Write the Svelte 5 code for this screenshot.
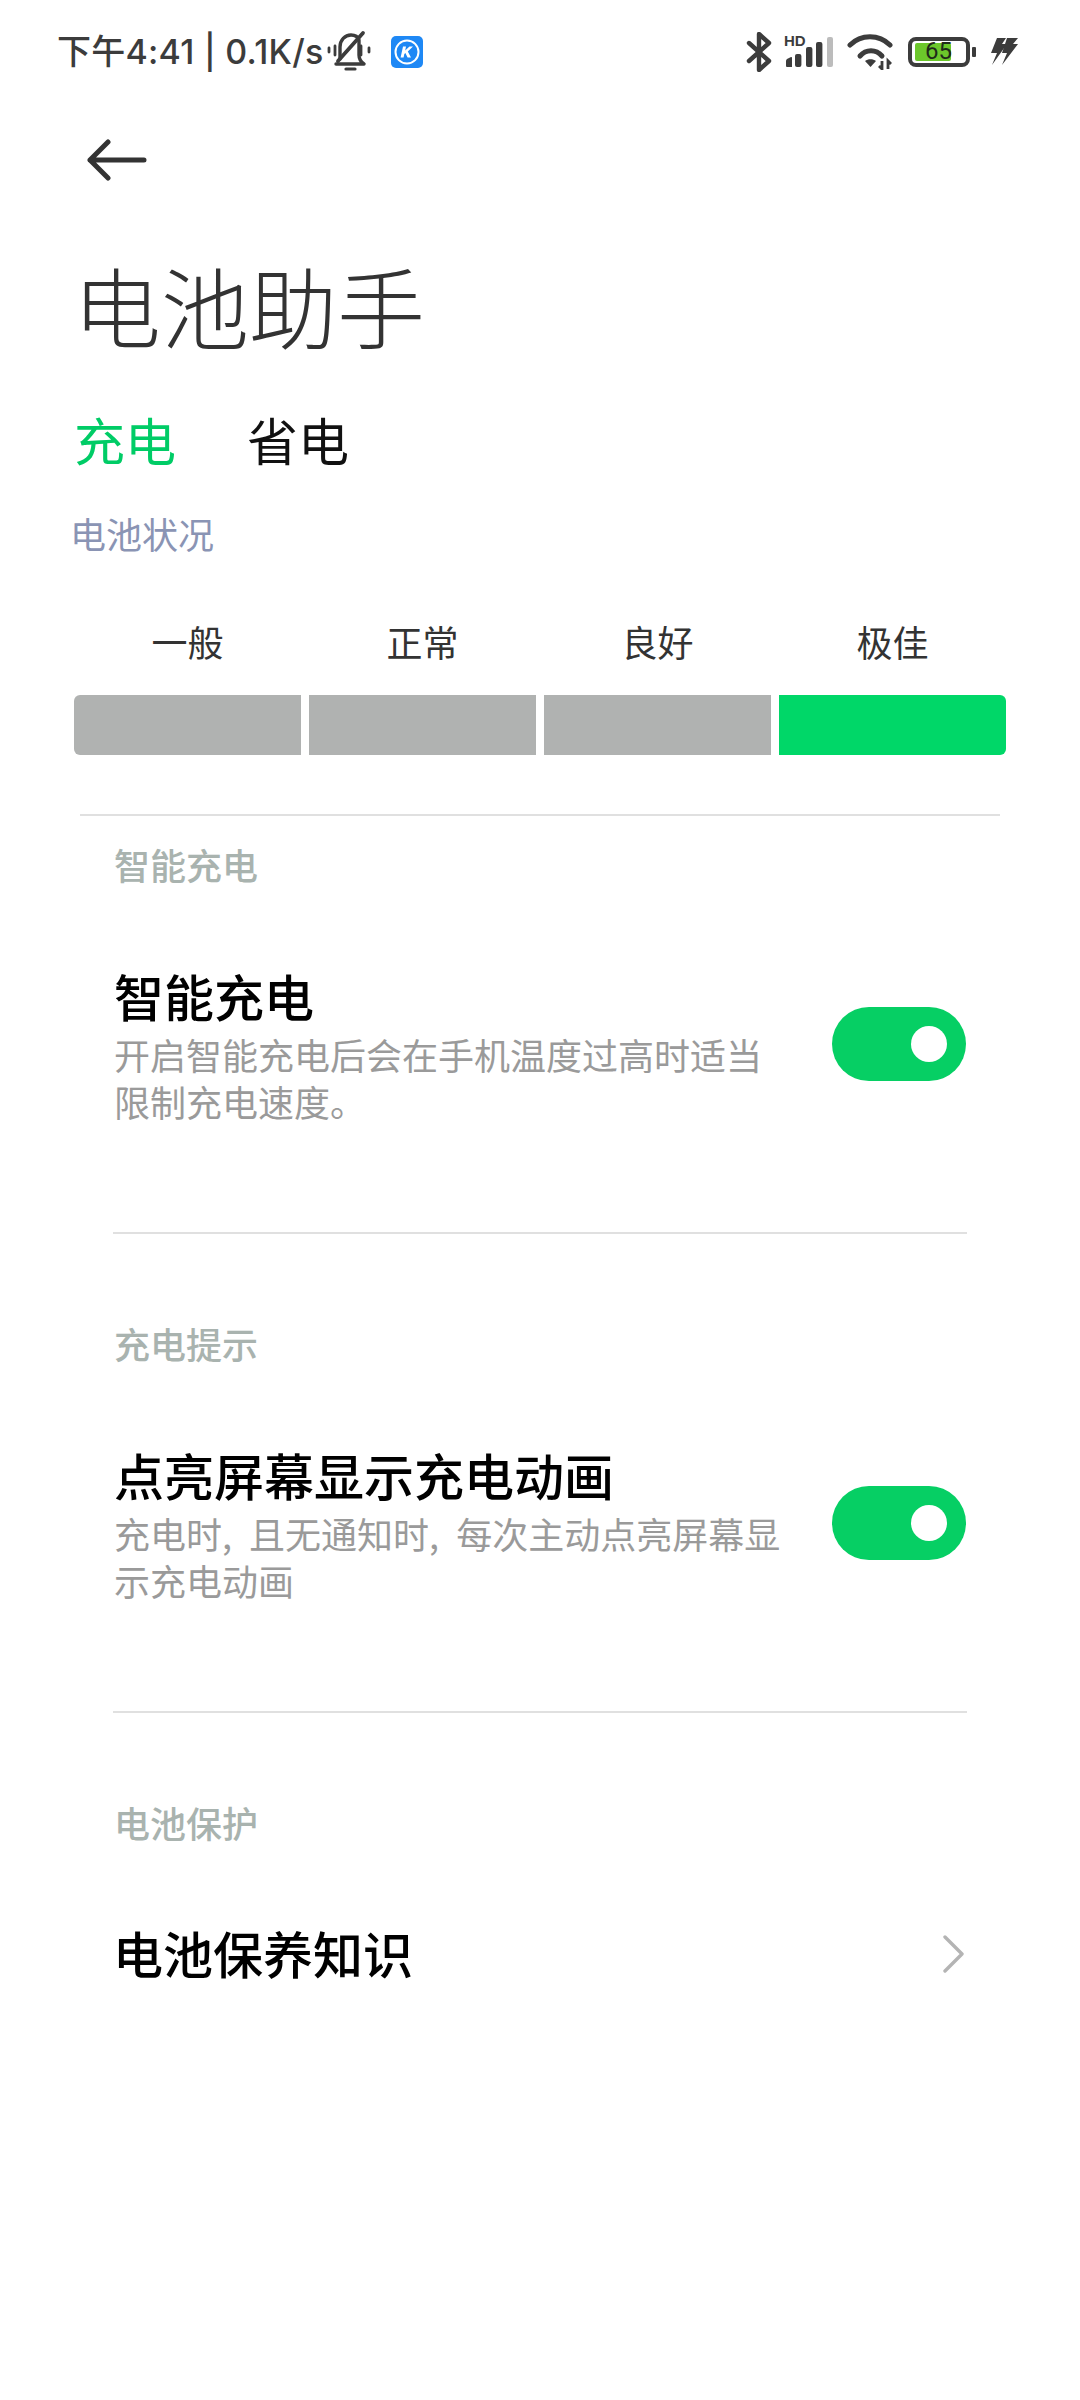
<script>
  const levels = [
    { name: '一般', on: false },
    { name: '正常', on: false },
    { name: '良好', on: false },
    { name: '极佳', on: true }
  ];
  const sections = [
    { head: '智能充电', title: '智能充电', lines: ['开启智能充电后会在手机温度过高时适当', '限制充电速度。'] },
    { head: '充电提示', title: '点亮屏幕显示充电动画', lines: ['充电时, 且无通知时, 每次主动点亮屏幕显', '示充电动画'] }
  ];
</script>

<div class="page">
  <div class="status">
    <div class="status-left">
      <span class="clock">下午4:41 | 0.1K/s</span>
      <svg class="bell" width="50" height="48" viewBox="3 0 50 48" fill="none" stroke="#3c3c3c" stroke-linecap="round" stroke-linejoin="round">
        <path d="M19 31V19c0-7 5-12 11-12 4 0 7 2 8 5v15c0 4 2 7 5 9H15" stroke-width="3.4" />
        <path d="M17 33L42 5" stroke-width="3.8" />
        <path d="M25 41h9" stroke-width="3.2" />
        <path d="M8 20v4M14 18v9M40 18v9M48 20v4" stroke-width="2.8" />
      </svg>
      <svg class="kapp" width="32" height="32" viewBox="0 0 32 32">
        <rect width="32" height="32" rx="5" fill="#1e88f5" />
        <circle cx="16" cy="16" r="11.5" fill="none" stroke="#fff" stroke-width="2" />
        <path d="M12 10.5h3l-.8 4 4.3-4h3.5l-5.2 4.9 3.2 6.1h-3.4l-2.2-4.5-1.1 1-.7 3.5h-3z" fill="#fff" />
      </svg>
    </div>
    <div class="status-right">
      <svg width="26" height="40" viewBox="0 0 26 40" fill="none" stroke="#3c3c3c" stroke-width="4.4" stroke-linejoin="round" stroke-linecap="round">
        <path d="M3 11l20 18-10 9V2l10 9L3 29" />
      </svg>
      <div class="signal">
        <span class="hd">HD</span>
        <svg width="50" height="30" viewBox="0 0 50 30" fill="#3c3c3c">
          <path d="M2 24q0-1 1-2l4-2q1-.5 1 1v9H3q-1 0-1-1z" />
          <rect x="11" y="17" width="6.4" height="13" rx="2" />
          <rect x="22" y="10" width="6.4" height="20" rx="2" />
          <rect x="32" y="5" width="6.4" height="25" rx="2" />
          <rect x="43" y="0" width="6" height="30" rx="2" fill="#bcbcbc" />
        </svg>
      </div>
      <svg class="wifi" width="48" height="36" viewBox="0 0 48 36" fill="none" stroke="#3c3c3c" stroke-width="5" stroke-linecap="round">
        <path d="M3 11C14 0 32 0 43 11" />
        <path d="M13 22c6-7 16-7 22 0" />
        <path d="M18 27l5.5 6 5.5-6c-3-2.5-8-2.5-11 0z" fill="#3c3c3c" stroke="none" />
        <path d="M35 27v8l-3-3M41 35v-8l3 3" stroke-width="2.8" stroke-linecap="butt" />
      </svg>
      <div class="battery">
        <div class="batt-body">
          <div class="batt-fill"></div>
          <span class="batt-num">65</span>
        </div>
        <div class="batt-nub"></div>
      </div>
      <svg class="bolt" width="28" height="30" viewBox="0 0 28 30" fill="#3c3c3c">
        <path d="M6 1h9l-4 6h5L1 28l5-12H0z" />
        <path d="M16 1h11l-5 6h5L11 28l5-12h-5z" />
      </svg>
    </div>
  </div>

  <div class="nav">
    <svg width="60" height="42" viewBox="0 0 60 42" fill="none" stroke="#333" stroke-width="5" stroke-linecap="round" stroke-linejoin="round">
      <path d="M21 3L3 21l18 18M3 21h54" />
    </svg>
  </div>

  <h1>电池助手</h1>

  <div class="tabs">
    <span class="tab active">充电</span>
    <span class="tab">省电</span>
  </div>

  <div class="state">电池状况</div>

  <div class="levels">
    {#each levels as l}
      <div class="level-name">{l.name}</div>
    {/each}
    {#each levels as l}
      <div class="bar" class:on={l.on}></div>
    {/each}
  </div>

  <div class="rule top"></div>

  {#each sections as s}
    <section class="sec">
      <div class="sec-head">{s.head}</div>
      <div class="item">
        <div class="item-text">
          <div class="item-title">{s.title}</div>
          {#each s.lines as line}
            <div class="item-sub">{line}</div>
          {/each}
        </div>
        <div class="toggle"><div class="knob"></div></div>
      </div>
      <div class="rule inner"></div>
    </section>
  {/each}

  <section class="sec">
    <div class="sec-head">电池保护</div>
    <div class="link">
      <span class="item-title">电池保养知识</span>
      <svg width="22" height="38" viewBox="0 0 22 38" fill="none" stroke="#b4b4b4" stroke-width="3.4" stroke-linecap="round" stroke-linejoin="round">
        <path d="M3 2l17 17L3 36" />
      </svg>
    </div>
  </section>
</div>

<style>
  :global(body) {
    margin: 0;
    background: #fff;
  }
  .page {
    width: 1080px;
    height: 2400px;
    overflow: hidden;
    background: #fff;
    font-family: "Noto Sans CJK SC", "Noto Sans", sans-serif;
    color: #000;
  }
  .status {
    height: 104px;
    padding: 0 61px 0 57px;
    display: flex;
    align-items: center;
    justify-content: space-between;
    color: #3c3c3c;
  }
  .status-left, .status-right {
    display: flex;
    align-items: center;
  }
  .clock {
    font-family: Inter, "Noto Sans CJK SC", sans-serif;
    font-size: 34px;
    line-height: 40px;
    letter-spacing: 0.25px;
    font-weight: 500;
    white-space: nowrap;
  }
  .kapp { margin-left: 17px; }
  .status-right { height: 44px; }
  .signal {
    position: relative;
    width: 50px;
    height: 30px;
    margin-left: 12px;
  }
  .hd {
    position: absolute;
    left: 0;
    top: -3px;
    font: 700 15px/14px "Liberation Sans", sans-serif;
  }
  .signal svg { display: block; }
  .wifi { margin-left: 13px; }
  .battery {
    display: flex;
    align-items: center;
    margin-left: 13px;
  }
  .batt-body {
    position: relative;
    box-sizing: border-box;
    width: 62px;
    height: 30px;
    border: 4.5px solid #3c3c3c;
    border-radius: 8px;
  }
  .batt-fill {
    position: absolute;
    left: 3px;
    top: 2px;
    bottom: 2px;
    width: 36px;
    background: #6cc72b;
    border-radius: 2px;
  }
  .batt-num {
    position: absolute;
    left: 13px;
    top: -3px;
    font: 400 24px/26px "Roboto", sans-serif;
    color: #1f2a1a;
  }
  .batt-nub {
    width: 4px;
    height: 10px;
    margin-left: 2px;
    background: #3c3c3c;
    border-radius: 1px;
  }
  .bolt { margin-left: 15px; }
  .nav {
    height: 112px;
    padding-left: 87px;
    display: flex;
    align-items: center;
  }
  .nav svg { display: block; }
  h1 {
    margin: 0;
    padding-left: 73px;
    height: 184px;
    font-size: 88px;
    line-height: 176px;
    font-weight: 300;
    color: #333;
  }
  .tabs {
    height: 78px;
    padding-left: 74px;
    display: flex;
    gap: 71px;
    align-items: center;
  }
  .tab {
    font-size: 51px;
    line-height: 78px;
    color: #111;
  }
  .tab.active { color: #00cc66; }
  .state {
    margin-top: 29px;
    padding-left: 70px;
    height: 52px;
    font-size: 36px;
    line-height: 52px;
    color: #8a94b4;
  }
  .levels {
    margin: 57px 74px 0 74px;
    display: grid;
    grid-template-columns: repeat(4, 1fr);
    grid-template-rows: 50px 60px;
    column-gap: 8px;
    row-gap: 29px;
  }
  .level-name {
    text-align: center;
    font-size: 36px;
    line-height: 50px;
    color: #333;
  }
  .bar { background: #b0b2b1; }
  .bar:nth-child(5) { border-radius: 6px 0 0 6px; }
  .bar.on {
    background: #00d768;
    border-radius: 0 6px 6px 0;
  }
  .rule {
    height: 2px;
    background: #e0e0e0;
  }
  .rule.top { margin: 59px 80px 0 80px; }
  .rule.inner { margin: 0 -1px 0 -1px; }
  .sec {
    padding: 0 114px 0 114px;
  }
  .sec-head {
    padding-top: 23px;
    height: 50px;
    font-size: 36px;
    line-height: 50px;
    font-weight: 500;
    color: #a9b3af;
  }
  .sec:nth-of-type(n+2) .sec-head { padding-top: 84px; }
  .item {
    display: flex;
    align-items: flex-start;
    justify-content: space-between;
    padding: 75px 0 107px;
  }
  .item-text { width: 680px; }
  .item-title {
    font-size: 50px;
    line-height: 62px;
    font-weight: 500;
    color: #000;
  }
  .item-sub {
    font-size: 36px;
    line-height: 47px;
    word-spacing: 9px;
    color: #9a9a9a;
    white-space: nowrap;
  }
  .item-sub:nth-child(2) { margin-top: 5px; }
  .toggle {
    position: relative;
    flex: none;
    margin-top: 43px;
    width: 134px;
    height: 74px;
    background: #06cf64;
    border-radius: 37px;
  }
  .knob {
    position: absolute;
    right: 19px;
    top: 19px;
    width: 36px;
    height: 36px;
    border-radius: 50%;
    background: #fff;
  }
  .link {
    margin-top: 74px;
    display: flex;
    align-items: center;
    justify-content: space-between;
    padding-right: 2px;
  }
  .link .item-title { margin-left: -1px; }
  .link svg { display: block; margin-top: 3px; }
</style>
